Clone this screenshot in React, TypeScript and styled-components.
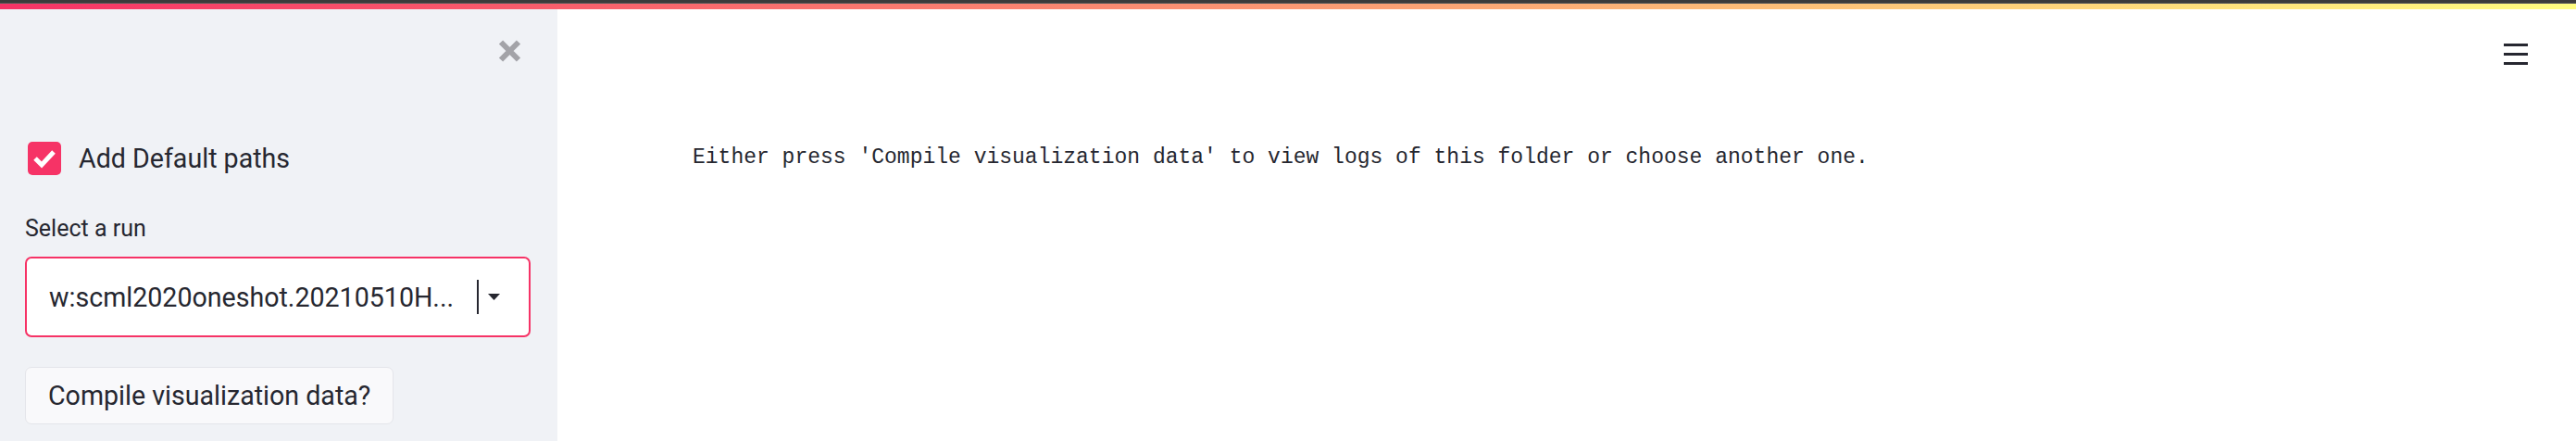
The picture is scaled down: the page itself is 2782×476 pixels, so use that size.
import React from "react";
import styled, { createGlobalStyle } from "styled-components";

const Global = createGlobalStyle`
  html, body { margin: 0; padding: 0; background: #ffffff; }
  body { font-family: Roboto, "Noto Sans", sans-serif; color: #262730; }
  * { box-sizing: border-box; }
`;

const Page = styled.div`
  width: 2782px;
  height: 476px;
  display: flex;
  flex-direction: column;
  overflow: hidden;
`;

const Chrome = styled.div`
  height: 4px;
  background: #3b3b3b;
  border-bottom: 1px solid #5a5a5a;
`;

const Decoration = styled.div`
  height: 6px;
  background: linear-gradient(90deg, rgb(246, 51, 102), rgb(255, 253, 128));
`;

const Body = styled.div`
  flex: 1;
  display: flex;
`;

const Sidebar = styled.aside`
  width: 602px;
  flex: none;
  background: #f0f2f6;
  padding: 0 29px 0 27px;
  display: flex;
  flex-direction: column;
  align-items: flex-start;
`;

const CloseRow = styled.div`
  align-self: stretch;
  display: flex;
  justify-content: flex-end;
  margin-top: 32px;
  padding-right: 10px;
  height: 26px;
`;

const CloseButton = styled.button`
  width: 25px;
  height: 26px;
  padding: 0;
  border: none;
  background: transparent;
  display: flex;
  align-items: center;
  justify-content: center;
`;

const CheckRow = styled.label`
  display: flex;
  align-items: center;
  gap: 19px;
  margin-top: 85px;
  margin-left: 3px;
  height: 36px;
  font-size: 28.6px;
  color: #262730;
`;

const CheckBox = styled.span`
  width: 36px;
  height: 36px;
  border-radius: 5px;
  background: #f63366;
  display: flex;
  align-items: center;
  justify-content: center;
`;

const FieldLabel = styled.div`
  margin-top: 42px;
  height: 32px;
  line-height: 32px;
  font-size: 25px;
  color: #262730;
`;

const SelectBox = styled.div`
  margin-top: 14px;
  align-self: stretch;
  height: 87px;
  border: 2px solid #f63366;
  border-radius: 7px;
  background: #ffffff;
  display: flex;
  align-items: center;
  padding: 0 31px 0 24px;
`;

const SelectValue = styled.span`
  flex: 1;
  font-size: 28.6px;
  color: #262730;
  white-space: nowrap;
  overflow: hidden;
`;

const Caret = styled.span`
  width: 2px;
  height: 37px;
  background: #262730;
  margin: 0 10px 0 8px;
`;

const Button = styled.button`
  margin-top: 32px;
  width: 398px;
  height: 62px;
  border: 1px solid #e4e5ea;
  border-radius: 7px;
  background: #f9f9fb;
  font-family: inherit;
  font-size: 28.6px;
  color: #262730;
  padding: 0 0 0 24px;
  text-align: left;
`;

const Main = styled.main`
  flex: 1;
  display: flex;
  flex-direction: column;
  padding: 0 52px 0 146px;
`;

const Header = styled.div`
  display: flex;
  justify-content: flex-end;
  padding-top: 37px;
`;

const Hamburger = styled.button`
  width: 26px;
  height: 23px;
  padding: 0;
  border: none;
  background: transparent;
  display: flex;
  flex-direction: column;
  justify-content: space-between;
`;

const Bar = styled.span`
  display: block;
  height: 3px;
  width: 26px;
  background: #262730;
`;

const Message = styled.pre`
  margin: 84px 0 0 0;
  font-family: "Liberation Mono", "DejaVu Sans Mono", monospace;
  font-size: 23px;
  line-height: 32px;
  color: #262730;
`;

export default function App() {
  return (
    <Page>
      <Global />
      <Chrome />
      <Decoration />
      <Body>
        <Sidebar>
          <CloseRow>
            <CloseButton aria-label="Close sidebar">
              <svg width="25" height="26" viewBox="0 0 25 26">
                <path d="M3 3.5 L22 22.5 M22 3.5 L3 22.5" stroke="#a3a3a8" strokeWidth="6" strokeLinecap="butt" />
              </svg>
            </CloseButton>
          </CloseRow>
          <CheckRow>
            <CheckBox>
              <svg width="26" height="22" viewBox="0 0 26 22">
                <path d="M3 11 L10 18 L23 4" stroke="#ffffff" strokeWidth="5" fill="none" />
              </svg>
            </CheckBox>
            Add Default paths
          </CheckRow>
          <FieldLabel>Select a run</FieldLabel>
          <SelectBox>
            <SelectValue>w:scml2020oneshot.20210510H...</SelectValue>
            <Caret />
            <svg width="13" height="7" viewBox="0 0 13 7">
              <path d="M0 0 L13 0 L6.5 7 Z" fill="#262730" />
            </svg>
          </SelectBox>
          <Button>Compile visualization data?</Button>
        </Sidebar>
        <Main>
          <Header>
            <Hamburger aria-label="Menu">
              <Bar />
              <Bar />
              <Bar />
            </Hamburger>
          </Header>
          <Message>Either press 'Compile visualization data' to view logs of this folder or choose another one.</Message>
        </Main>
      </Body>
    </Page>
  );
}
